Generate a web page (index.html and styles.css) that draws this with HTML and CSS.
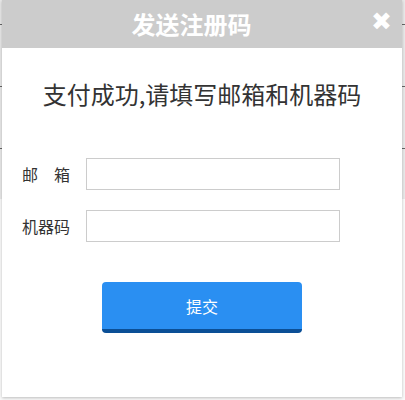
FILE: index.html
```html
<!DOCTYPE html>
<html lang="zh-CN">
<head>
<meta charset="utf-8">
<title>发送注册码</title>
<link rel="stylesheet" href="styles.css">
</head>
<body>
<div class="page">
  <div class="page-row"></div>
  <div class="page-row"></div>
  <div class="page-row"></div>
  <div class="page-band"></div>
</div>
<div class="modal">
  <div class="modal-header">
    <h2 class="modal-title">发送注册码</h2>
    <span class="modal-close">✖</span>
  </div>
  <div class="modal-body">
    <p class="modal-msg">支付成功,请填写邮箱和机器码</p>
    <div class="form-row">
      <label class="form-label">邮　箱</label>
      <input class="form-input" type="text">
    </div>
    <div class="form-row">
      <label class="form-label">机器码</label>
      <input class="form-input" type="text">
    </div>
    <div class="form-actions">
      <button class="btn-submit" type="button">提交</button>
    </div>
  </div>
</div>
</body>
</html>
```

FILE: styles.css
```css
* { box-sizing: border-box; }
html, body { margin: 0; padding: 0; }
body {
  width: 405px;
  height: 400px;
  overflow: hidden;
  background: #fafafa;
  font-family: "Noto Sans CJK SC", "Noto Sans", "Liberation Sans", sans-serif;
  position: relative;
}
.page { width: 405px; }
.page-row {
  height: 62px;
  border-bottom: 1px solid #666;
  background: #e9e9e9;
}
.page-row:first-child { height: 25px; }
.page-band { height: 50px; background: #e9e9e9; }
.modal {
  position: absolute;
  left: 2px;
  top: 0;
  width: 400px;
  height: 397px;
  background: #fff;
  box-shadow: 0 1px 3px rgba(0,0,0,0.25);
}
.modal-header {
  height: 48px;
  background: #cccccc;
  position: relative;
  display: flex;
  align-items: center;
  justify-content: center;
  padding-right: 21px;
}
.modal-title {
  margin: 0;
  color: #fff;
  font-size: 24px;
  font-weight: bold;
  line-height: 48px;
}
.modal-close {
  position: absolute;
  right: 10px;
  top: 7px;
  color: #fff;
  font-size: 25px;
  line-height: 30px;
  font-family: "DejaVu Sans", sans-serif;
}
.modal-body { padding: 0 0 0 20px; }
.modal-msg {
  margin: 31px 0 0 -20px;
  text-align: center;
  font-size: 24px;
  line-height: 30px;
  color: #333;
}
.form-row {
  display: flex;
  align-items: center;
  margin-top: 49px;
}
.form-row + .form-row { margin-top: 20px; }
.form-label {
  width: 64px;
  font-size: 16px;
  color: #333;
}
.form-input {
  width: 254px;
  height: 32px;
  border: 1px solid #cccccc;
  margin: 0;
  padding: 0 6px;
  outline: none;
}
.form-actions {
  margin-top: 40px;
  padding-left: 80px;
}
.btn-submit {
  width: 200px;
  height: 51px;
  background: #2a8ff2;
  border: 0;
  border-bottom: 4px solid #0b4f96;
  border-radius: 4px;
  color: #fff;
  font-family: inherit;
  font-size: 16px;
  padding: 0;
}
```
